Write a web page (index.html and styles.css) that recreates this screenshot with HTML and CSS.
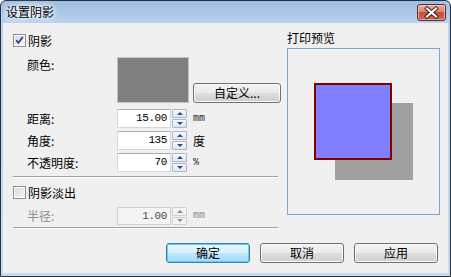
FILE: index.html
```html
<!DOCTYPE html>
<html lang="zh-CN">
<head>
    <meta charset="UTF-8">
    <title>设置阴影</title>
    <link rel="stylesheet" href="styles.css">
</head>
<body>
    <div class="window">
        <div class="titlebar">
            <span class="title">设置阴影</span>
            <div class="close">
                <svg width="27" height="15" viewBox="0 0 27 15">
                    <path d="M9 3.5 L18 11.5 M18 3.5 L9 11.5" stroke="#3b1a1a" stroke-width="4" stroke-linecap="square"/>
                    <path d="M9 3.5 L18 11.5 M18 3.5 L9 11.5" stroke="#fff" stroke-width="2.2" stroke-linecap="square"/>
                </svg>
            </div>
        </div>

        <div class="client">
            <div class="main">
                <div class="left">
                    <div class="check">
                        <span class="box">
                            <svg width="11" height="11" viewBox="0 0 11 11">
                                <path d="M2.2 5.2 L4.4 7.8 L8.8 2" fill="none" stroke="#1f3f9a" stroke-width="1.7"/>
                            </svg>
                        </span>
                        <span>阴影</span>
                    </div>

                    <div class="color-row">
                        <span class="label">颜色:</span>
                        <div class="swatch"></div>
                        <div class="btn custom">自定义...</div>
                    </div>

                    <div class="field-row first">
                        <span class="label">距离:</span>
                        <div class="spin">
                            <div class="value">15.00</div>
                            <div class="arrows"><span class="up"></span><span class="down"></span></div>
                        </div>
                        <span class="unit small">mm</span>
                    </div>
                    <div class="field-row">
                        <span class="label">角度:</span>
                        <div class="spin">
                            <div class="value">135</div>
                            <div class="arrows"><span class="up"></span><span class="down"></span></div>
                        </div>
                        <span class="unit">度</span>
                    </div>
                    <div class="field-row">
                        <span class="label">不透明度:</span>
                        <div class="spin">
                            <div class="value">70</div>
                            <div class="arrows"><span class="up"></span><span class="down"></span></div>
                        </div>
                        <span class="unit small">%</span>
                    </div>

                    <div class="sep"></div>

                    <div class="check fade">
                        <span class="box"></span>
                        <span>阴影淡出</span>
                    </div>

                    <div class="field-row disabled">
                        <span class="label">半径:</span>
                        <div class="spin">
                            <div class="value">1.00</div>
                            <div class="arrows"><span class="up"></span><span class="down"></span></div>
                        </div>
                        <span class="unit small">mm</span>
                    </div>

                    <div class="sep last"></div>
                </div>

                <div class="right">
                    <div class="preview-title">打印预览</div>
                    <div class="preview">
                        <div class="shadow"></div>
                        <div class="shape"></div>
                    </div>
                </div>
            </div>

            <div class="buttons">
                <div class="btn default">确定</div>
                <div class="btn">取消</div>
                <div class="btn">应用</div>
            </div>
        </div>
    </div>
</body>
</html>
```

FILE: styles.css
```css
body {
    margin: 0;
    font-family: "Noto Sans CJK SC", sans-serif;
    font-size: 12px;
    color: #000;
}

.window {
    box-sizing: border-box;
    width: 451px;
    height: 277px;
    border: 1px solid #27323f;
    border-radius: 6px 6px 0 0;
    padding: 0 2px 3px;
    background: linear-gradient(#9fbee0, #b8d2ee 22px, #c3daf1);
    display: flex;
    flex-direction: column;
}

.titlebar {
    flex: none;
    height: 22px;
    display: flex;
    justify-content: space-between;
}

.title {
    padding: 4px 0 0 3px;
    line-height: 14px;
    text-shadow: 0 0 4px #fff, 0 0 6px #fff, 0 0 8px #fff;
}

.close {
    box-sizing: border-box;
    width: 29px;
    height: 17px;
    margin: 3px 2px 0 0;
    border: 1px solid #5a2b2b;
    border-radius: 3px;
    background: linear-gradient(#eab0a3, #d88574 45%, #c4503b 50%, #cc6450);
    box-shadow: inset 0 0 0 1px rgba(255, 220, 210, 0.6);
}

.close svg {
    display: block;
}

.client {
    flex: 1;
    background: #f0f0f0;
    display: flex;
    flex-direction: column;
    padding: 11px 8px 10px 10px;
}

.main {
    display: flex;
    gap: 9px;
}

.left {
    width: 265px;
    flex: none;
}

.right {
    width: 153px;
    flex: none;
}

/* checkboxes */
.check {
    display: flex;
    align-items: center;
    gap: 2px;
    height: 13px;
    line-height: 13px;
}

.box {
    flex: none;
    box-sizing: border-box;
    width: 13px;
    height: 13px;
    border: 1px solid #8e8f8f;
    background: linear-gradient(135deg, #d6d6d6, #f8f8f8);
    box-shadow: inset 0 0 0 1px #fff;
}

.box svg {
    display: block;
}

.check.fade {
    margin-top: 8px;
}

/* colour row */
.color-row {
    display: flex;
    align-items: flex-end;
    margin-top: 10px;
}

.label {
    flex: none;
    box-sizing: border-box;
    width: 104px;
    padding-left: 14px;
    line-height: 14px;
}

.color-row .label {
    align-self: flex-start;
    padding-top: 1px;
}

.swatch {
    flex: none;
    box-sizing: border-box;
    width: 72px;
    height: 46px;
    border: 1px solid #c4c4c4;
    background: #808080;
}

.btn {
    flex: none;
    box-sizing: border-box;
    width: 84px;
    height: 20px;
    border: 1px solid #707070;
    border-radius: 3px;
    background: linear-gradient(#f2f2f2, #ebebeb 48%, #dddddd 52%, #cfcfcf);
    box-shadow: inset 0 0 0 1px #fbfbfb;
    text-align: center;
    line-height: 18px;
}

.btn.custom {
    width: 88px;
    margin-left: 4px;
}

.btn.default {
    border-color: #3c7fb1;
    background: linear-gradient(#eaf6fd, #d9f0fc 48%, #bee6fd 52%, #a7d9f5);
    box-shadow: inset 0 0 0 1px #5ad0f5;
}

/* spin fields */
.field-row {
    display: flex;
    align-items: center;
    height: 19px;
    margin-top: 3px;
}

.field-row.first {
    margin-top: 6px;
}

.spin {
    flex: none;
    display: flex;
    gap: 1px;
    height: 19px;
}

.value {
    box-sizing: border-box;
    width: 54px;
    height: 19px;
    border: 1px solid #d5d8de;
    border-top-color: #abadb3;
    background: #fff;
    text-align: right;
    padding-right: 3px;
    font-family: "Liberation Mono", monospace;
    font-size: 11px;
    letter-spacing: -0.4px;
    line-height: 17px;
}

.arrows {
    display: flex;
    flex-direction: column;
    gap: 1px;
    width: 15px;
}

.arrows span {
    flex: 1;
    box-sizing: border-box;
    border: 1px solid #a9b6c5;
    border-radius: 1px;
    background: linear-gradient(#f5f8fb, #dfe8f1);
    display: flex;
    align-items: center;
    justify-content: center;
}

.arrows .up::after,
.arrows .down::after {
    content: "";
    border-left: 3px solid transparent;
    border-right: 3px solid transparent;
}

.arrows .up::after {
    border-bottom: 3px solid #2c4f83;
}

.arrows .down::after {
    border-top: 3px solid #2c4f83;
}

.unit {
    margin-left: 6px;
    line-height: 14px;
}

.unit.small {
    font-family: "Liberation Mono", monospace;
    font-size: 10px;
    color: #222;
}

.field-row.disabled {
    margin-top: 8px;
    height: 18px;
}

.disabled .label {
    color: #8d8d8d;
}

.disabled .spin,
.disabled .value {
    height: 18px;
}

.disabled .value {
    background: #f4f4f4;
    border-color: #cfcfcf;
    color: #4a4a4a;
    line-height: 16px;
}

.disabled .arrows span {
    border-color: #cfcfcf;
    background: #f4f4f4;
}

.disabled .arrows .up::after {
    border-bottom-color: #8d8d8d;
}

.disabled .arrows .down::after {
    border-top-color: #8d8d8d;
}

.disabled .unit,
.disabled .unit.small {
    color: #8d8d8d;
}

.sep {
    margin-top: 4px;
    border-top: 1px solid #a0a0a0;
    border-bottom: 1px solid #fff;
}

.sep.last {
    margin-top: 2px;
}

/* preview */
.preview-title {
    margin-top: -3px;
    line-height: 14px;
}

.preview {
    position: relative;
    box-sizing: border-box;
    width: 153px;
    height: 167px;
    margin-top: 3px;
    border: 1px solid #76a6da;
    background: #f0f0f0;
}

.shadow {
    position: absolute;
    left: 47px;
    top: 54px;
    width: 78px;
    height: 77px;
    background: #a0a0a0;
}

.shape {
    position: absolute;
    left: 26px;
    top: 34px;
    box-sizing: border-box;
    width: 78px;
    height: 77px;
    border: 2px solid #800000;
    background: #8080ff;
}

/* bottom buttons */
.buttons {
    margin-top: auto;
    display: flex;
    justify-content: flex-end;
    gap: 10px;
    padding-right: 2px;
}
```
